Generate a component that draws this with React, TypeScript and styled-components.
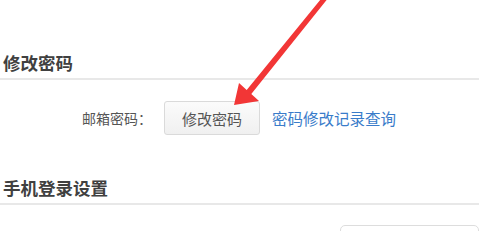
import * as React from "react";
import styled, { createGlobalStyle } from "styled-components";

const GlobalStyle = createGlobalStyle`
  html, body {
    margin: 0;
    padding: 0;
    background: #ffffff;
    overflow: hidden;
  }
  body {
    font-family: "Noto Sans CJK SC", "Noto Sans", sans-serif;
  }
`;

const Page = styled.div`
  position: relative;
  width: 479px;
  height: 231px;
  padding-top: 48px;
  box-sizing: border-box;
  overflow: hidden;
`;

const SectionTitle = styled.h3<{ $gap?: number }>`
  margin: ${(p) => p.$gap ?? 0}px 0 0;
  padding: 0 3px;
  height: 30px;
  line-height: 30px;
  font-size: 17.5px;
  font-weight: bold;
  color: #404040;
  border-bottom: 2px solid #e8e8e8;
`;

const Row = styled.div`
  display: flex;
  align-items: center;
  padding: 21px 0 0 82px;
  height: 34px;
`;

const Label = styled.span`
  font-size: 14px;
  color: #555;
  margin-right: 12px;
`;

const Button = styled.button`
  width: 96px;
  height: 34px;
  padding: 0;
  border: 1px solid #dadada;
  border-radius: 3px;
  background: linear-gradient(#fbfbfb, #f0f0f0);
  font-family: inherit;
  font-size: 15px;
  color: #555;
  cursor: pointer;
`;

const Link = styled.a`
  margin-left: 12px;
  font-size: 15.5px;
  color: #3a7cca;
  text-decoration: none;
`;

const BoxRow = styled.div`
  display: flex;
  padding: 20px 0 0 340px;
`;

const Box = styled.div`
  width: 160px;
  height: 32px;
  border: 1px solid #dddddd;
  border-radius: 5px;
  background: #fff;
`;

const Arrow = styled.svg`
  position: absolute;
  left: 0;
  top: 0;
  pointer-events: none;
`;

export default function App() {
  return (
    <Page>
      <GlobalStyle />
      <SectionTitle>修改密码</SectionTitle>
      <Row>
        <Label>邮箱密码：</Label>
        <Button>修改密码</Button>
        <Link href="#">密码修改记录查询</Link>
      </Row>
      <SectionTitle $gap={38}>手机登录设置</SectionTitle>
      <BoxRow>
        <Box />
      </BoxRow>
      <Arrow width="479" height="231" viewBox="0 0 479 231">
        <polygon
          points="234,105 239,83 246.7,90.1 323,-3.5 327,-0.5 251.3,93.9 259,101"
          fill="#f23636"
        />
      </Arrow>
    </Page>
  );
}
